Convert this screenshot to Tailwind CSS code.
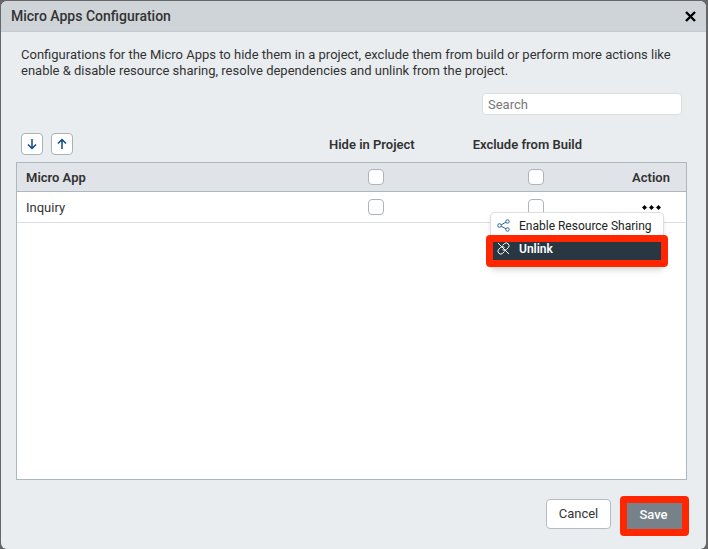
<!DOCTYPE html>
<html lang="en">
<head>
    <meta charset="UTF-8">
    <meta name="viewport" content="width=device-width, initial-scale=1.0">
    <title>Micro Apps Configuration</title>
    <!-- Tailwind CSS CDN -->
    <script src="https://cdn.jsdelivr.net/npm/@tailwindcss/browser@4"></script>
</head>
<body class="h-screen overflow-hidden bg-[#666769] pt-px pl-px pr-0.5 font-['Roboto',sans-serif] text-[13px] text-[#333]">
    <div role="dialog" aria-labelledby="title" class="flex h-full flex-col overflow-hidden rounded-md bg-[#e9edf0]">
        <!-- Title bar -->
        <header class="flex h-[31px] shrink-0 items-center justify-between border-b border-[#c3cacf] bg-[#cfd4d9] px-[10px]">
            <h1 id="title" class="text-[14px] font-medium">Micro Apps Configuration</h1>
            <button type="button" aria-label="Close" class="text-black">
                <svg class="size-[11px]" viewBox="0 0 11 11" fill="none" stroke="currentColor" stroke-width="2.4">
                    <path d="M1 1l9 9M10 1l-9 9" />
                </svg>
            </button>
        </header>

        <main class="flex min-h-0 flex-1 flex-col pr-[19px] pl-[15px]">
            <p class="mt-[15px] pl-[5px] leading-4">
                Configurations for the Micro Apps to hide them in a project, exclude them from build or perform more actions like<br>
                enable &amp; disable resource sharing, resolve dependencies and unlink from the project.
            </p>

            <div class="mt-[14px] flex justify-end pr-[5px]">
                <input type="search" aria-label="Search" placeholder="Search" class="h-[22px] w-[200px] rounded border border-[#dcdfe2] bg-white px-[5px] placeholder:text-[#777]">
            </div>

            <!-- Sort buttons and column labels -->
            <div class="mt-[18px] flex items-center justify-between pr-[105px] pl-[5px]">
                <div class="flex gap-2">
                    <button type="button" aria-label="Sort descending" class="flex size-[22px] items-center justify-center rounded border border-[#a9b4b9] bg-white text-[#0d4a80]">
                        <svg class="size-3" viewBox="0 0 12 12" fill="none" stroke="currentColor" stroke-width="1.5">
                            <path d="M6 1v9.500M2 6.500l4 4 4-4" />
                        </svg>
                    </button>
                    <button type="button" aria-label="Sort ascending" class="flex size-[22px] items-center justify-center rounded border border-[#a9b4b9] bg-white text-[#0d4a80]">
                        <svg class="size-3" viewBox="0 0 12 12" fill="none" stroke="currentColor" stroke-width="1.5">
                            <path d="M6 11V1.500M2 5.500l4-4 4 4" />
                        </svg>
                    </button>
                </div>
                <div class="flex gap-[58px] pt-0.5 font-semibold">
                    <label for="hide-all">Hide in Project</label>
                    <label for="exclude-all">Exclude from Build</label>
                </div>
            </div>

            <!-- App list -->
            <div class="mt-[7px] flex-1 border border-[#adb7be] bg-white">
                <table class="w-full table-fixed border-separate border-spacing-0">
                    <thead>
                        <tr class="h-[29px] bg-[#e0e4e8]">
                            <th class="border-b border-[#adb7be] pt-0.5 pl-[9px] text-left font-semibold">Micro App</th>
                            <th class="w-[160px] border-b border-[#adb7be]">
                                <input type="checkbox" id="hide-all" class="block mx-auto size-4 appearance-none rounded border border-[#aab4ba] bg-white">
                            </th>
                            <th class="w-[160px] border-b border-[#adb7be]">
                                <input type="checkbox" id="exclude-all" class="block mx-auto size-4 appearance-none rounded border border-[#aab4ba] bg-white">
                            </th>
                            <th class="w-[70px] border-b border-[#adb7be] pt-0.5 text-center font-semibold">Action</th>
                        </tr>
                    </thead>
                    <tbody>
                        <tr class="h-[31px]">
                            <td class="border-b border-[#dcdfe1] pt-0.5 pl-[9px]">Inquiry</td>
                            <td class="border-b border-[#dcdfe1]">
                                <input type="checkbox" aria-label="Hide Inquiry in Project" class="block mx-auto size-4 appearance-none rounded border border-[#aab4ba] bg-white">
                            </td>
                            <td class="border-b border-[#dcdfe1]">
                                <input type="checkbox" aria-label="Exclude Inquiry from Build" class="block mx-auto size-4 appearance-none rounded border border-[#aab4ba] bg-white">
                            </td>
                            <td class="border-b border-[#dcdfe1]">
                                <div class="relative flex justify-center">
                                    <button type="button" aria-label="More actions" aria-expanded="true" class="text-black">
                                        <svg class="h-[5px] w-[19px]" viewBox="0 0 19 5" fill="currentColor">
                                            <path d="M2.500 .3l2.200 2.200-2.200 2.200L.3 2.500zM9.500 .3l2.200 2.200-2.200 2.200-2.200-2.200zM16.500 .3l2.200 2.200-2.200 2.200-2.200-2.200z" stroke="currentColor" stroke-width=".6" stroke-linejoin="round" />
                                        </svg>
                                    </button>
                                    <!-- Row menu -->
                                    <div class="absolute top-[7px] right-[22px] w-[174px] rounded-t border border-[#dcdee0] bg-white shadow-md">
                                        <button type="button" class="flex h-[22px] w-full items-center gap-[9px] pt-1 pl-1.5 text-[12px] text-[#222]">
                                            <svg class="size-[13px] text-[#26639b]" viewBox="0 0 13 13" fill="none" stroke="currentColor">
                                                <circle cx="2.500" cy="6.500" r="1.800" />
                                                <circle cx="10.500" cy="2.500" r="1.700" />
                                                <circle cx="10.500" cy="10.500" r="1.700" />
                                                <path d="M4.200 5.800L9 3.200M4.200 7.200L9 9.800" />
                                            </svg>
                                            Enable Resource Sharing
                                        </button>
                                        <div class="-mx-[5px] rounded border-[7px] border-[#ff2600]">
                                            <button type="button" class="flex h-[18px] w-full items-center gap-[9px] bg-[#293742] pb-1 pl-1 text-[12px] font-semibold text-white">
                                                <svg class="size-[13px]" viewBox="0 0 13 13" fill="none" stroke="currentColor">
                                                    <path d="M5.500 3.500l1.700-1.700a2.700 2.700 0 0 1 4 4L9.500 7.500a2.700 2.700 0 0 1-4 0M7.500 9.500l-1.700 1.700a2.700 2.700 0 0 1-4-4l1.700-1.700a2.700 2.700 0 0 1 4 0" />
                                                    <path d="M1 1l11 11" />
                                                </svg>
                                                Unlink
                                            </button>
                                        </div>
                                    </div>
                                </div>
                            </td>
                        </tr>
                    </tbody>
                </table>
            </div>
        </main>

        <footer class="flex h-[69px] shrink-0 items-start justify-end gap-[9px] pt-4 pr-[17px]">
            <button type="button" class="mt-[3px] h-[30px] w-[65px] rounded border border-[#b3bcc2] bg-white">Cancel</button>
            <div class="rounded border-[7px] border-[#ff2600]">
                <button type="button" class="block h-[26px] w-[55px] bg-[#76818a] pr-0.5 pb-0.5 font-medium text-white">Save</button>
            </div>
        </footer>
    </div>
</body>
</html>
